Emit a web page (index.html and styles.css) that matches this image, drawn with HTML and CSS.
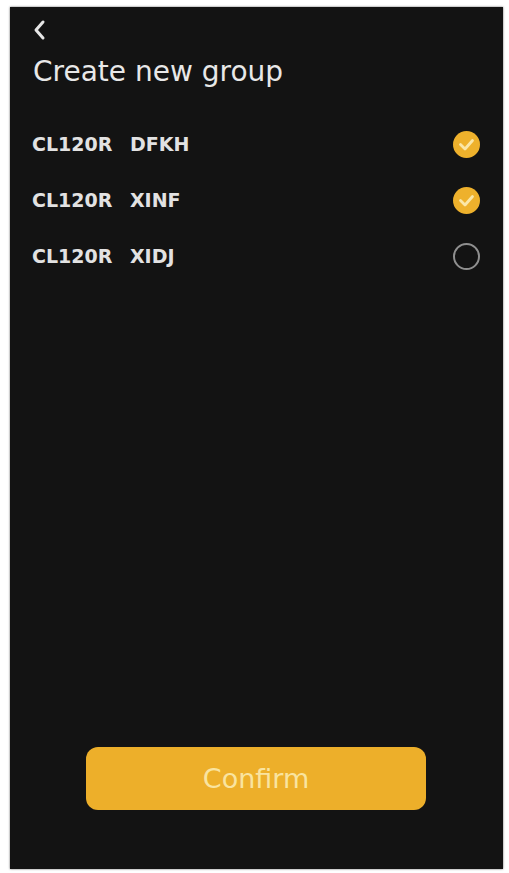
FILE: index.html
```html
<!DOCTYPE html>
<html lang="en">

<head>
    <meta charset="UTF-8">
    <meta name="viewport" content="width=device-width, initial-scale=1.0">
    <title>Create new group</title>
    <link rel="stylesheet" href="styles.css">
</head>

<body>
    <div class="screen">
        <div class="header">
            <button class="back-btn" aria-label="Back">
                <svg width="14" height="22" viewBox="0 0 14 22">
                    <polyline points="11,3 4,11 11,19" fill="none" stroke="#e6e6e6" stroke-width="3" stroke-linecap="round" stroke-linejoin="round" />
                </svg>
            </button>
            <h1 class="title">Create new group</h1>
        </div>

        <ul class="device-list">
            <li class="device">
                <span class="device-name">CL120R DFKH</span>
                <span class="check checked">
                    <svg width="27" height="27" viewBox="0 0 27 27">
                        <polyline points="7.5,13.5 12,18 19.5,9.5" fill="none" stroke="#fbe7a8" stroke-width="2.8" stroke-linecap="round" stroke-linejoin="round" />
                    </svg>
                </span>
            </li>
            <li class="device">
                <span class="device-name">CL120R XINF</span>
                <span class="check checked">
                    <svg width="27" height="27" viewBox="0 0 27 27">
                        <polyline points="7.5,13.5 12,18 19.5,9.5" fill="none" stroke="#fbe7a8" stroke-width="2.8" stroke-linecap="round" stroke-linejoin="round" />
                    </svg>
                </span>
            </li>
            <li class="device">
                <span class="device-name">CL120R XIDJ</span>
                <span class="check"></span>
            </li>
        </ul>

        <div class="footer">
            <button class="confirm-btn">Confirm</button>
        </div>
    </div>
</body>

</html>
```

FILE: styles.css
```css
html,
body {
    margin: 0;
    background-color: #ffffff;
}

body {
    padding: 7px 6px 4px 10px;
    font-family: "DejaVu Sans", "Liberation Sans", sans-serif;
}

.screen {
    width: 493px;
    height: 862px;
    background-color: #131313;
    box-shadow: 0 0 2px rgba(0, 0, 0, 0.6);
    display: flex;
    flex-direction: column;
    box-sizing: border-box;
    padding: 0 23px 0 22px;
}

.header {
    padding-top: 12px;
}

.back-btn {
    display: block;
    background: none;
    border: none;
    padding: 0;
    width: 14px;
    height: 22px;
    cursor: pointer;
}

.title {
    margin: 15px 0 0 1px;
    font-size: 28px;
    font-weight: normal;
    line-height: 32px;
    color: #e8e8e8;
}

.device-list {
    list-style: none;
    margin: 28px 0 0 0;
    padding: 0;
}

.device {
    height: 56px;
    display: flex;
    align-items: center;
    justify-content: space-between;
}

.device-name {
    font-size: 19px;
    font-weight: bold;
    color: #e2e2e2;
    word-spacing: 11px;
}

.check {
    width: 27px;
    height: 27px;
    border-radius: 50%;
    box-sizing: border-box;
    border: 2px solid #8f8f8f;
}

.check.checked {
    border: none;
    background-color: #eeb12c;
}

.check svg {
    display: block;
}

.footer {
    margin-top: auto;
    padding-bottom: 59px;
    display: flex;
    justify-content: center;
}

.confirm-btn {
    width: 340px;
    height: 63px;
    border: none;
    border-radius: 12px;
    background-color: #edaf2a;
    color: #f9e4a0;
    font-family: "DejaVu Sans", "Liberation Sans", sans-serif;
    font-size: 27px;
    cursor: pointer;
}
```
